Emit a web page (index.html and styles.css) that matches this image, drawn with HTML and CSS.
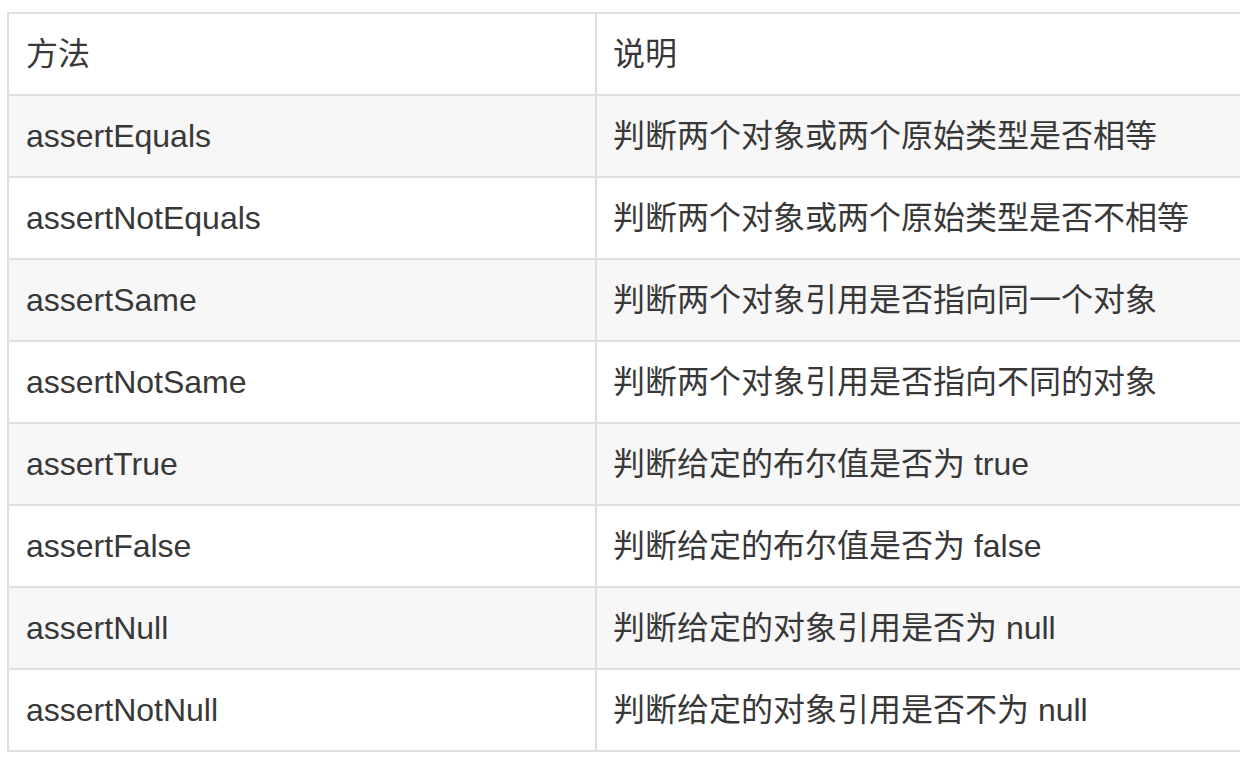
FILE: index.html
```html
<!DOCTYPE html>
<html lang="zh">
<head>
<meta charset="utf-8">
<link rel="stylesheet" href="styles.css">
</head>
<body>
<table class="api">
  <colgroup><col class="c1"><col class="c2"></colgroup>
  <thead>
    <tr><th>方法</th><th>说明</th></tr>
  </thead>
  <tbody>
    <tr><td>assertEquals</td><td>判断两个对象或两个原始类型是否相等</td></tr>
    <tr><td>assertNotEquals</td><td>判断两个对象或两个原始类型是否不相等</td></tr>
    <tr><td>assertSame</td><td>判断两个对象引用是否指向同一个对象</td></tr>
    <tr><td>assertNotSame</td><td>判断两个对象引用是否指向不同的对象</td></tr>
    <tr><td>assertTrue</td><td>判断给定的布尔值是否为 true</td></tr>
    <tr><td>assertFalse</td><td>判断给定的布尔值是否为 false</td></tr>
    <tr><td>assertNull</td><td>判断给定的对象引用是否为 null</td></tr>
    <tr><td>assertNotNull</td><td>判断给定的对象引用是否不为 null</td></tr>
  </tbody>
</table>
</body>
</html>
```
FILE: styles.css
```css
html {
  overflow: hidden;
  background: #fff;
}
body {
  margin: 12px 0 0 7px;
  font-family: "Liberation Sans", Arial, "Noto Sans CJK SC", sans-serif;
  color: #383838;
}
.api {
  border-collapse: collapse;
  width: 1280px;
  table-layout: fixed;
}
.c1 { width: 588px; }
.api th, .api td {
  border: 2px solid #dfdfdf;
  padding: 12px 16px;
  line-height: 56px;
  font-size: 32px;
  font-weight: normal;
  text-align: left;
  white-space: nowrap;
}
.api th:first-child, .api td:first-child {
  padding-left: 17px;
}
.api tbody tr:nth-child(odd) {
  background: #f7f7f7;
}
```
